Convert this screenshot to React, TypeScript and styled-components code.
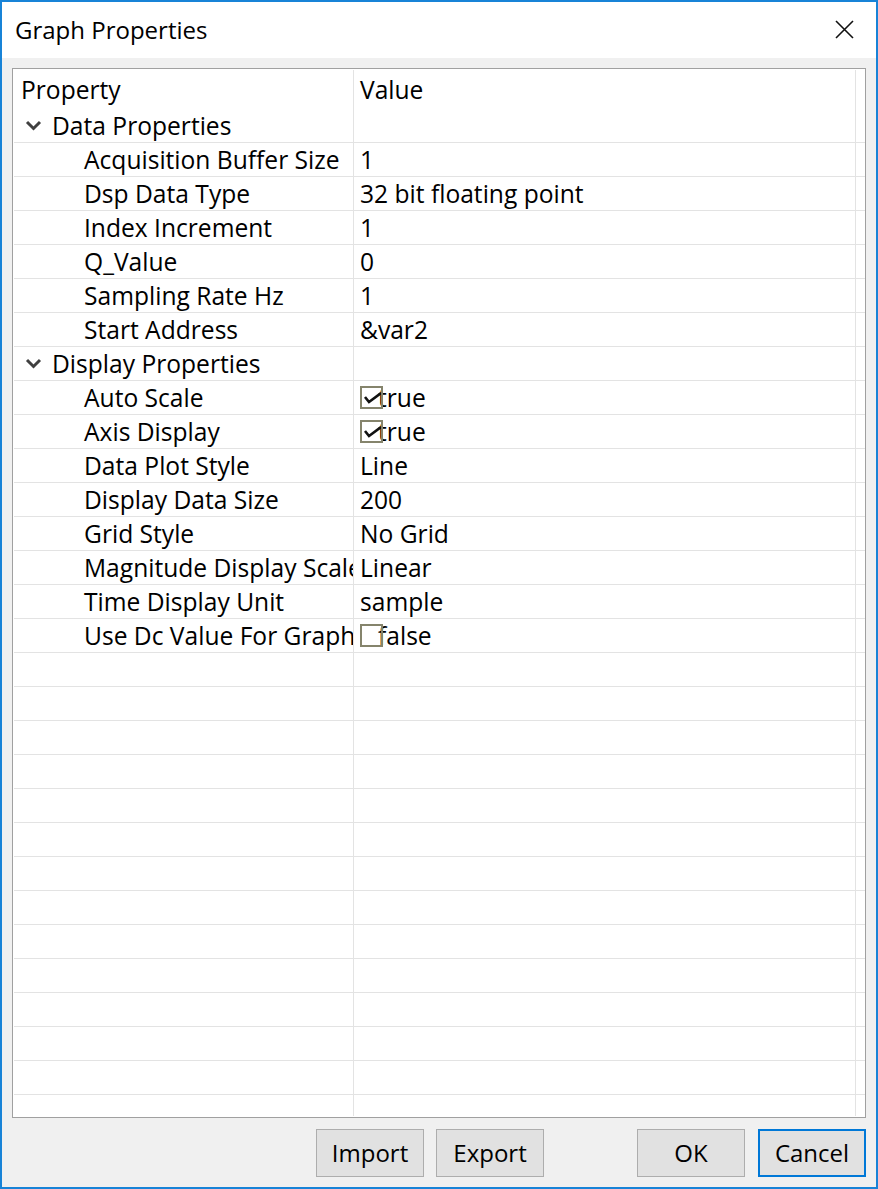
import React from "react";
import styled, { createGlobalStyle } from "styled-components";

const Global = createGlobalStyle`
  html, body { margin: 0; padding: 0; background: #ffffff; }
  body { font-family: "Open Sans", "Noto Sans", sans-serif; color: #000; }
  * { box-sizing: border-box; }
`;

const Window = styled.div`
  width: 878px;
  height: 1189px;
  border: 2px solid #1883d7;
  display: flex;
  flex-direction: column;
  background: #f0f0f0;
`;

const TitleBar = styled.div`
  height: 56px;
  flex: none;
  background: #ffffff;
  display: flex;
  align-items: center;
  justify-content: space-between;
  padding: 0 22px 2px 13px;
`;

const Title = styled.div`
  font-size: 24px;
  color: #000;
`;

const CloseButton = styled.div`
  width: 20px;
  height: 20px;
  display: flex;
  align-items: center;
  justify-content: center;
`;

const Body = styled.div`
  flex: 1;
  display: flex;
  flex-direction: column;
  gap: 11px;
  padding: 10px;
`;

const Table = styled.div`
  height: 1050px;
  border: 1px solid #a0a0a0;
  background: #ffffff;
  padding: 1px 0 1px 1px;
  display: flex;
  flex-direction: column;
`;

const Row = styled.div<{ $header?: boolean; $filler?: boolean }>`
  display: grid;
  grid-template-columns: 340px 502px 9px;
  height: ${(p) => (p.$header ? "39px" : p.$filler ? "auto" : "34px")};
  border-bottom: ${(p) => (p.$header || p.$filler ? "none" : "1px solid #e3e3e3")};
  flex: ${(p) => (p.$filler ? "1" : "none")};
  font-size: 24.6px;
`;

const NameCell = styled.div<{ $indent: number }>`
  border-right: 1px solid #e3e3e3;
  display: flex;
  align-items: center;
  padding-left: ${(p) => p.$indent}px;
  white-space: nowrap;
  overflow: hidden;
`;

const ValueCell = styled.div`
  border-right: 1px solid #e3e3e3;
  display: flex;
  align-items: center;
  padding-left: 6px;
  white-space: nowrap;
  overflow: hidden;
`;

const Spare = styled.div``;

const Chevron = styled.svg`
  width: 17px;
  height: 11px;
  margin-right: 10px;
  flex: none;
`;

const CheckBox = styled.span`
  width: 23px;
  height: 23px;
  border: 2px solid #85846c;
  background: transparent;
  margin-right: -5px;
  flex: none;
  position: relative;
  display: inline-flex;
`;

const CheckMark = styled.svg`
  position: absolute;
  left: 0;
  top: 0;
  width: 19px;
  height: 19px;
`;

const ButtonBar = styled.div`
  height: 48px;
  flex: none;
  display: flex;
  justify-content: flex-end;
`;

const Button = styled.button<{ $primary?: boolean; $gapLeft: number }>`
  width: 108px;
  height: 48px;
  margin-left: ${(p) => p.$gapLeft}px;
  background: #e1e1e1;
  border: ${(p) => (p.$primary ? "2px solid #0078d7" : "1px solid #adadad")};
  font-family: "Open Sans", "Noto Sans", sans-serif;
  font-size: 24px;
  color: #000;
  padding: 0 0 2px 0;
`;

type Item =
  | { kind: "group"; name: string }
  | { kind: "prop"; name: string; value: string; check?: boolean };

const items: Item[] = [
  { kind: "group", name: "Data Properties" },
  { kind: "prop", name: "Acquisition Buffer Size", value: "1" },
  { kind: "prop", name: "Dsp Data Type", value: "32 bit floating point" },
  { kind: "prop", name: "Index Increment", value: "1" },
  { kind: "prop", name: "Q_Value", value: "0" },
  { kind: "prop", name: "Sampling Rate Hz", value: "1" },
  { kind: "prop", name: "Start Address", value: "&var2" },
  { kind: "group", name: "Display Properties" },
  { kind: "prop", name: "Auto Scale", value: "true", check: true },
  { kind: "prop", name: "Axis Display", value: "true", check: true },
  { kind: "prop", name: "Data Plot Style", value: "Line" },
  { kind: "prop", name: "Display Data Size", value: "200" },
  { kind: "prop", name: "Grid Style", value: "No Grid" },
  { kind: "prop", name: "Magnitude Display Scale", value: "Linear" },
  { kind: "prop", name: "Time Display Unit", value: "sample" },
  { kind: "prop", name: "Use Dc Value For Graph", value: "false", check: false },
];

const EMPTY_ROWS = 13;

export default function App() {
  return (
    <>
      <Global />
      <Window>
        <TitleBar>
          <Title>Graph Properties</Title>
          <CloseButton>
            <svg width="19" height="19" viewBox="0 0 19 19">
              <path d="M1 1 L18 18 M18 1 L1 18" stroke="#111" strokeWidth="1.6" fill="none" />
            </svg>
          </CloseButton>
        </TitleBar>
        <Body>
          <Table>
            <Row $header>
              <NameCell $indent={7}>Property</NameCell>
              <ValueCell>Value</ValueCell>
              <Spare />
            </Row>
            {items.map((it, i) =>
              it.kind === "group" ? (
                <Row key={i}>
                  <NameCell $indent={11}>
                    <Chevron viewBox="0 0 17 11">
                      <path d="M2 2 L8.5 8.5 L15 2" stroke="#404040" strokeWidth="3" fill="none" />
                    </Chevron>
                    {it.name}
                  </NameCell>
                  <ValueCell />
                  <Spare />
                </Row>
              ) : (
                <Row key={i}>
                  <NameCell $indent={70}>{it.name}</NameCell>
                  <ValueCell>
                    {it.check !== undefined && (
                      <CheckBox>
                        {it.check && (
                          <CheckMark viewBox="0 0 19 19">
                            <path d="M3 9 L7 14 L19 5" stroke="#111" strokeWidth="2.6" fill="none" />
                          </CheckMark>
                        )}
                      </CheckBox>
                    )}
                    {it.value}
                  </ValueCell>
                  <Spare />
                </Row>
              )
            )}
            {Array.from({ length: EMPTY_ROWS }).map((_, i) => (
              <Row key={"e" + i}>
                <NameCell $indent={0} />
                <ValueCell />
                <Spare />
              </Row>
            ))}
            <Row $filler>
              <NameCell $indent={0} />
              <ValueCell />
              <Spare />
            </Row>
          </Table>
          <ButtonBar>
            <Button $gapLeft={0}>Import</Button>
            <Button $gapLeft={12}>Export</Button>
            <Button $gapLeft={93}>OK</Button>
            <Button $gapLeft={13} $primary>Cancel</Button>
          </ButtonBar>
        </Body>
      </Window>
    </>
  );
}
